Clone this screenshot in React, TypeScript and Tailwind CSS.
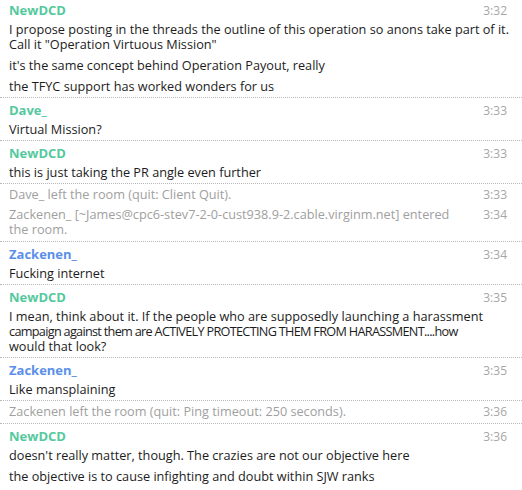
type Line = { text: string; tight?: boolean }
type Block =
    | { kind: 'msg'; name: string; color: 'green' | 'blue'; time: string; msgs: Line[][] }
    | { kind: 'sys'; items: { lines: string[]; time: string }[] }

// lines are broken where the original client wrapped them
const blocks: Block[] = [
    {
        kind: 'msg',
        name: 'NewDCD',
        color: 'green',
        time: '3:32',
        msgs: [
            [
                { text: 'I propose posting in the threads the outline of this operation so anons take part of it.' },
                { text: 'Call it "Operation Virtuous Mission"' },
            ],
            [{ text: "it's the same concept behind Operation Payout, really" }],
            [{ text: 'the TFYC support has worked wonders for us' }],
        ],
    },
    { kind: 'msg', name: 'Dave_', color: 'green', time: '3:33', msgs: [[{ text: 'Virtual Mission?' }]] },
    {
        kind: 'msg',
        name: 'NewDCD',
        color: 'green',
        time: '3:33',
        msgs: [[{ text: 'this is just taking the PR angle even further' }]],
    },
    {
        kind: 'sys',
        items: [
            { lines: ['Dave_ left the room (quit: Client Quit).'], time: '3:33' },
            {
                lines: ['Zackenen_ [~James@cpc6-stev7-2-0-cust938.9-2.cable.virginm.net] entered', 'the room.'],
                time: '3:34',
            },
        ],
    },
    { kind: 'msg', name: 'Zackenen_', color: 'blue', time: '3:34', msgs: [[{ text: 'Fucking internet' }]] },
    {
        kind: 'msg',
        name: 'NewDCD',
        color: 'green',
        time: '3:35',
        msgs: [
            [
                { text: 'I mean, think about it. If the people who are supposedly launching a harassment' },
                { text: 'campaign against them are ACTIVELY PROTECTING THEM FROM HARASSMENT....how', tight: true },
                { text: 'would that look?' },
            ],
        ],
    },
    { kind: 'msg', name: 'Zackenen_', color: 'blue', time: '3:35', msgs: [[{ text: 'Like mansplaining' }]] },
    {
        kind: 'sys',
        items: [{ lines: ['Zackenen left the room (quit: Ping timeout: 250 seconds).'], time: '3:36' }],
    },
    {
        kind: 'msg',
        name: 'NewDCD',
        color: 'green',
        time: '3:36',
        msgs: [
            [{ text: "doesn't really matter, though. The crazies are not our objective here" }],
            [{ text: 'the objective is to cause infighting and doubt within SJW ranks' }],
        ],
    },
]

export default function App() {
    return (
        <div
            className="w-[522px] h-[490px] overflow-hidden bg-white text-[12.7px] leading-[15px] text-[#1c1c1c]"
            style={{ fontFamily: "'Open Sans', 'DejaVu Sans', sans-serif" }}
        >
            {blocks.map((b, i) => (
                <div key={i} className={i > 0 ? 'border-t border-dotted border-[#b8b8b8]' : ''}>
                    {b.kind === 'msg' ? (
                        <div className={`pl-[9px] pr-[15px] pb-[3px] ${i === 0 ? 'pt-[3px]' : 'pt-[5px]'}`}>
                            <div className="flex justify-between">
                                <span
                                    className={`font-bold text-[13px] ${b.color === 'green' ? 'text-[#55c99e]' : 'text-[#5b8fea]'}`}
                                >
                                    {b.name}
                                </span>
                                <span className="text-[12px] text-[#a6a6a6]">{b.time}</span>
                            </div>
                            {b.msgs.map((m, j) => (
                                <div key={j} className={j === 0 ? 'mt-[4px]' : 'mt-[6px]'}>
                                    {m.map((l, k) => (
                                        <div
                                            key={k}
                                            className={`whitespace-nowrap ${l.tight ? 'tracking-[-0.7px]' : ''}`}
                                        >
                                            {l.text}
                                        </div>
                                    ))}
                                </div>
                            ))}
                        </div>
                    ) : (
                        <div className="pl-[9px] pr-[15px] pt-[3px] pb-[4px] text-[#a0a0a0]">
                            {b.items.map((s, j) => (
                                <div key={j} className={`flex justify-between gap-[10px] ${j > 0 ? 'mt-[5px]' : ''}`}>
                                    <div>
                                        {s.lines.map((l, k) => (
                                            <div key={k} className="whitespace-nowrap">
                                                {l}
                                            </div>
                                        ))}
                                    </div>
                                    <span className="text-[12px] text-[#a6a6a6]">{s.time}</span>
                                </div>
                            ))}
                        </div>
                    )}
                </div>
            ))}
        </div>
    )
}
